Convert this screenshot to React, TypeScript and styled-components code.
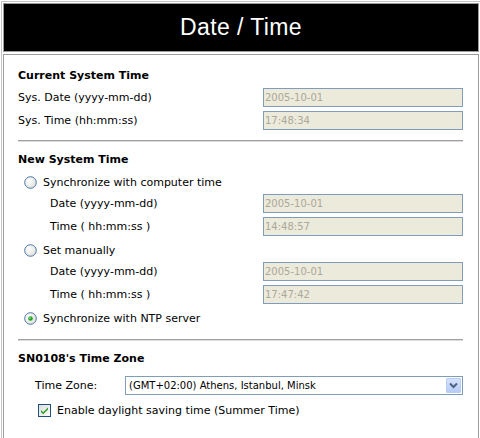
import React from "react";
import styled, { createGlobalStyle } from "styled-components";

const CELL_BORDER = `#9c9c9c`;
const FIELD_BORDER = `#7f9db9`;

const GlobalStyle = createGlobalStyle`
  html, body {
    margin: 0;
    padding: 0;
    background: #fff;
    overflow: hidden;
  }
  body {
    font-family: "DejaVu Sans", Verdana, sans-serif;
    font-size: 11px;
    color: #000;
  }
`;

const Frame = styled.div`
  margin: 1px 0 0 1px;
  width: 476px;
  padding: 1px;
  border: 1px solid #c4c4c4;

  display: flex;
  flex-direction: column;
  gap: 2px;
`;

const Header = styled.div`
  height: 49px;
  box-sizing: border-box;
  border: 1px solid ${CELL_BORDER};
  background: #000;

  display: flex;
  align-items: center;
  justify-content: center;

  color: #fff;
  font-family: "Liberation Sans", Arial, sans-serif;
  font-size: 23px;
  letter-spacing: 0.4px;
`;

const Content = styled.div`
  border: 1px solid ${CELL_BORDER};
  padding: 13px 15px 24px 14px;

  display: flex;
  flex-direction: column;
`;

const Heading = styled.div`
  height: 16px;
  line-height: 16px;
  font-weight: bold;
`;

const Divider = styled.div`
  margin: 10px 0;
  border-top: 1px solid #a0a0a0;
  border-bottom: 1px solid #dcdcdc;
`;

const RadioRow = styled.label`
  height: 21px;
  margin-top: 4px;
  padding-left: 6px;

  display: flex;
  align-items: center;
  gap: 6px;
`;

const Row = styled.div<{ $gap?: number }>`
  height: 19px;
  margin-top: ${(p) => p.$gap ?? 4}px;

  display: flex;
  align-items: center;

  ${RadioRow} + & {
    margin-top: 1px;
  }
`;

const Label = styled.span<{ $indent?: number; $width?: number }>`
  padding-left: ${(p) => p.$indent ?? 0}px;
  ${(p) => (p.$width ? `width: ${p.$width}px; flex: none;` : `flex: 1;`)}
  white-space: nowrap;
`;

const Field = styled.input`
  width: 200px;
  height: 19px;
  box-sizing: border-box;
  margin: 0;
  padding: 0 1px;

  border: 1px solid ${FIELD_BORDER};
  background: #ebeadb;
  color: #aca899;
  outline: none;

  font-family: "DejaVu Sans", Verdana, sans-serif;
  font-size: 10px;
`;

const SelectBox = styled.div`
  flex: 1;
  height: 19px;
  box-sizing: border-box;
  padding: 1px 1px 1px 3px;

  border: 1px solid ${FIELD_BORDER};
  background: #fff;

  display: flex;
  align-items: center;

  font-size: 10px;
`;

const SelectText = styled.span`
  flex: 1;
`;

const ArrowButton = styled.span`
  width: 15px;
  height: 15px;
  box-sizing: border-box;
  border: 1px solid #b9cdf6;
  border-radius: 1px;
  background: linear-gradient(#d6e2fc, #b6cbf7);

  display: flex;
  align-items: center;
  justify-content: center;
`;

const CheckRow = styled.label`
  height: 19px;
  margin-top: 6px;
  padding-left: 20px;

  display: flex;
  align-items: center;
  gap: 6px;
`;

function Radio({ checked }: { checked?: boolean }): JSX.Element {
  return (
    <svg width="13" height="13" viewBox="0 0 13 13">
      <defs>
        <radialGradient id="rb" cx="0.35" cy="0.35" r="0.8">
          <stop offset="0" stopColor="#ffffff" />
          <stop offset="1" stopColor="#dcdcd4" />
        </radialGradient>
      </defs>
      <circle cx="6.5" cy="6.5" r="5.8" fill="url(#rb)" stroke="#4a76a8" strokeWidth="1" />
      {checked ? (
        <>
          <circle cx="6.5" cy="6.5" r="2.3" fill="#21a121" />
          <circle cx="6" cy="6" r="0.9" fill="#7ee07e" />
        </>
      ) : null}
    </svg>
  );
}

function Checkbox(): JSX.Element {
  return (
    <svg width="13" height="13" viewBox="0 0 13 13">
      <defs>
        <linearGradient id="cb" x1="0" y1="0" x2="1" y2="1">
          <stop offset="0" stopColor="#dcdcd7" />
          <stop offset="1" stopColor="#ffffff" />
        </linearGradient>
      </defs>
      <rect x="0.5" y="0.5" width="12" height="12" fill="url(#cb)" stroke="#1c5180" />
      <path d="M3 6 L5.2 8.3 L10 3.6 L10 5.6 L5.2 10.3 L3 8 Z" fill="#21a121" />
    </svg>
  );
}

function Chevron(): JSX.Element {
  return (
    <svg width="9" height="7" viewBox="0 0 9 7">
      <path d="M1 1.5 L4.5 5 L8 1.5" fill="none" stroke="#4d6185" strokeWidth="2" />
    </svg>
  );
}

export default function App(): JSX.Element {
  return (
    <>
      <GlobalStyle />
      <Frame>
        <Header>Date / Time</Header>
        <Content>
          <Heading>Current System Time</Heading>
          <Row>
            <Label>Sys. Date (yyyy-mm-dd)</Label>
            <Field readOnly value="2005-10-01" />
          </Row>
          <Row>
            <Label>Sys. Time (hh:mm:ss)</Label>
            <Field readOnly value="17:48:34" />
          </Row>

          <Divider />

          <Heading>New System Time</Heading>
          <RadioRow>
            <Radio />
            Synchronize with computer time
          </RadioRow>
          <Row>
            <Label $indent={32}>Date (yyyy-mm-dd)</Label>
            <Field readOnly value="2005-10-01" />
          </Row>
          <Row>
            <Label $indent={32}>Time ( hh:mm:ss )</Label>
            <Field readOnly value="14:48:57" />
          </Row>
          <RadioRow>
            <Radio />
            Set manually
          </RadioRow>
          <Row>
            <Label $indent={32}>Date (yyyy-mm-dd)</Label>
            <Field readOnly value="2005-10-01" />
          </Row>
          <Row>
            <Label $indent={32}>Time ( hh:mm:ss )</Label>
            <Field readOnly value="17:47:42" />
          </Row>
          <RadioRow>
            <Radio checked />
            Synchronize with NTP server
          </RadioRow>

          <Divider />

          <Heading>SN0108's Time Zone</Heading>
          <Row $gap={9}>
            <Label $indent={17} $width={90}>
              Time Zone:
            </Label>
            <SelectBox>
              <SelectText>(GMT+02:00) Athens, Istanbul, Minsk</SelectText>
              <ArrowButton>
                <Chevron />
              </ArrowButton>
            </SelectBox>
          </Row>
          <CheckRow>
            <Checkbox />
            Enable daylight saving time (Summer Time)
          </CheckRow>
        </Content>
      </Frame>
    </>
  );
}
